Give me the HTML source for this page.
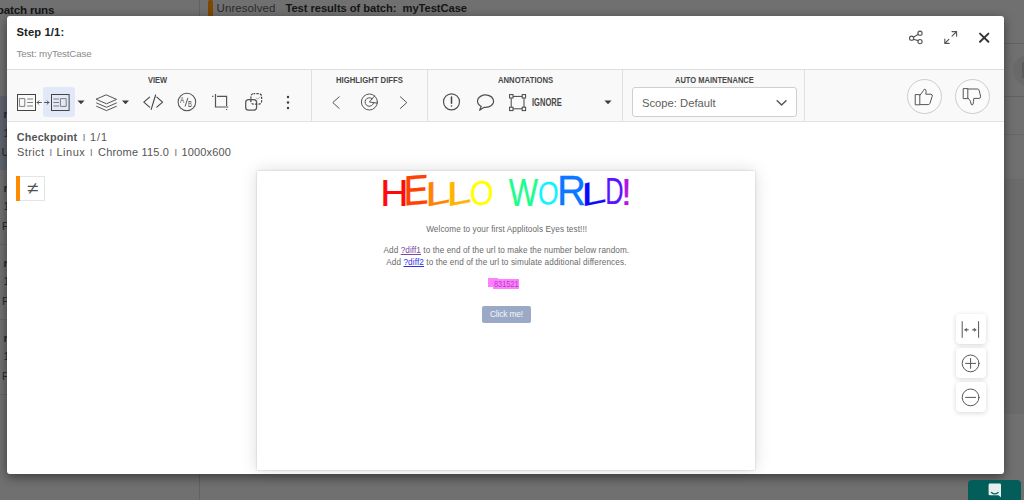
<!DOCTYPE html>
<html lang="en">
<head>
<meta charset="utf-8">
<title>Step 1/1 - Test results of batch: myTestCase</title>
<style>
*{box-sizing:border-box;margin:0;padding:0}
html,body{width:1024px;height:500px;overflow:hidden}
body{position:relative;background:#707070;font-family:"Liberation Sans",sans-serif;color:#333}
.abs{position:absolute}
.t{position:absolute;white-space:nowrap;line-height:1;transform-origin:0 0}
svg{position:absolute;overflow:visible}
/* dimmed page behind the modal */
#leftpanel{left:0;top:0;width:199px;height:500px;background:#707070}
#leftdiv{left:199px;top:0;width:1px;height:500px;background:#626262}
#selrow{left:0;top:96px;width:199px;height:73px;background:#5f6570}
.rowsep{left:0;width:199px;height:1px;background:#656565}
.bgt{color:#161616}
.frag{font-size:11px;color:#2a2a2a}
#obar{left:207.8px;top:0;width:4.8px;height:20px;background:#7e4800;border-radius:2px}
/* modal */
#modal{left:7px;top:16px;width:997px;height:458px;background:#fff;border-radius:3px;box-shadow:0 3px 11px rgba(0,0,0,.48)}
#hdrline{left:7px;top:69px;width:997px;height:1px;background:#dedede}
#toolbar{left:7px;top:70px;width:997px;height:51px;background:#f9f9f9}
#tbline{left:7px;top:121px;width:997px;height:1px;background:#e2e2e2}
.vdiv{top:70px;width:1px;height:51px;background:#e0e0e0}
#sel{left:43px;top:87px;width:32px;height:30px;background:#e1e9f8;border-radius:3px}
.inf{color:#555}
.sep{color:#777;font-weight:bold}
.lbl{font-weight:bold;color:#484848}
#scope{left:632px;top:87px;width:165px;height:30px;background:#fff;border:1px solid #cfcfcf;border-radius:3px}
.circ{width:35px;height:35px;border:1.7px solid #cdcdcd;border-radius:50%;background:#fbfbfb}
/* badge */
#badge{left:16px;top:175.5px;width:28.6px;height:25.2px;background:#fff;border:1px solid #e4e4e4}
#badgebar{left:16px;top:175.5px;width:3.7px;height:25.2px;background:#ff8c00}
/* screenshot */
#shot{left:257px;top:171px;width:498px;height:299px;background:#fff;box-shadow:0 0 2px rgba(0,0,0,.2),0 0 16px rgba(0,0,0,.14)}
.st{color:#6a6a6a}
.lnk1{color:#7a4aa6;text-decoration:underline;text-decoration-thickness:0.8px}
.lnk2{color:#3030e8;text-decoration:underline;text-decoration-thickness:0.8px}
.hl{background:#ff80ff}
#btn{left:482px;top:306px;width:49px;height:17px;background:#9aaac6;border-radius:2px}
.zb{left:956px;width:30px;height:30px;background:#fff;border-radius:4px;box-shadow:0 1px 5px rgba(0,0,0,.16)}
#chat{left:968px;top:480px;width:53px;height:24px;background:#035e5a;border-radius:4px 4px 0 0}
</style>
<style id="fit">
#t_batch{left:-3.2px;top:4.45px;font-size:11.6px;letter-spacing:-0.178px}
#t_unres{left:216.5px;top:2.5px;font-size:11.5px;letter-spacing:0.089px}
#t_title{left:285.5px;top:2.65px;font-size:11.2px;letter-spacing:-0.061px}
#t_step{left:16.5px;top:26.65px;font-size:11.2px;letter-spacing:0.125px}
#t_test{left:16.5px;top:48.85px;font-size:9.8px;letter-spacing:-0.133px}
#t_view{left:147.5px;top:75.0px;font-size:9.5px;transform:scaleX(0.788)}
#t_hd{left:335.8px;top:75.0px;font-size:9.5px;transform:scaleX(0.8122)}
#t_ann{left:497.8px;top:75.0px;font-size:9.5px;transform:scaleX(0.8088)}
#t_am{left:674.6px;top:75.0px;font-size:9.5px;transform:scaleX(0.791)}
#t_ign{left:531.8px;top:97.75px;font-size:10px;transform:scaleX(0.7538)}
#t_scope{left:642.2px;top:97.5px;font-size:11.5px;transform:scaleX(0.9763)}
#t_cp{left:16.8px;top:131.85px;font-size:10.8px;letter-spacing:0.156px}
#t_cps{left:82.9px;top:133.05px;font-size:7.4px;letter-spacing:-2.0px}
#t_cpn{left:90.0px;top:131.85px;font-size:10.8px;letter-spacing:1.0px}
#t_i1{left:17.0px;top:146.75px;font-size:11px;letter-spacing:0.4px}
#t_s1{left:49.7px;top:148.05px;font-size:7.4px;letter-spacing:-2.0px}
#t_i2{left:56.5px;top:146.75px;font-size:11px;letter-spacing:0.5px}
#t_s2{left:90.2px;top:148.05px;font-size:7.4px;letter-spacing:-2.0px}
#t_i3{left:98.0px;top:146.75px;font-size:11px;letter-spacing:0.182px}
#t_s3{left:174.7px;top:148.05px;font-size:7.4px;letter-spacing:-2.0px}
#t_i4{left:181.5px;top:146.75px;font-size:11px;letter-spacing:0.143px}
#t_ne{left:26.6px;top:180.25px;font-size:17px;transform:scaleX(1.2)}
#t_w1{left:426.2px;top:225.65px;font-size:8.2px;letter-spacing:0.091px}
#t_w2{left:383.5px;top:246.65px;font-size:8.2px;letter-spacing:0.078px}
#t_w3{left:386.2px;top:258.65px;font-size:8.2px;letter-spacing:0.104px}
#t_num{left:493.8px;top:279.65px;font-size:9.2px;transform:scaleX(0.8)}
#t_btn{left:490.0px;top:310.05px;font-size:8.4px;letter-spacing:-0.175px}
#t_ab1{left:180.0px;top:95.85px;font-size:8.8px;transform:scaleX(0.7)}
#t_ab2{left:188.1px;top:99.85px;font-size:8.8px;transform:scaleX(0.65)}
</style>
</head>
<body>
<!-- background page (dimmed) -->
<div class="abs" id="leftpanel"></div>
<div class="abs" id="selrow"></div>
<div class="abs rowsep" style="top:169px"></div>
<div class="abs rowsep" style="top:244px"></div>
<div class="abs rowsep" style="top:319px"></div>
<div class="abs rowsep" style="top:394px"></div>
<div class="abs" id="leftdiv"></div>
<span class="t bgt" id="t_batch" style="font-weight:bold">batch runs</span>
<div class="abs" id="obar"></div>
<span class="t bgt" id="t_unres" style="color:#2b2b2b">Unresolved</span>
<span class="t bgt" id="t_title" style="font-weight:bold">Test results of batch:&nbsp; myTestCase</span>


<span class="t bgt frag" style="left:3.5px;top:108.5px;font-weight:bold">run 1</span>
<span class="t bgt frag" style="left:3.5px;top:127.5px">13 Aug 2023</span>
<span class="t bgt frag" style="left:1.5px;top:146.5px">Unresolved</span>
<span class="t bgt frag" style="left:3.5px;top:183px;font-weight:bold">run 2</span>
<span class="t bgt frag" style="left:3.5px;top:201px">12 Aug 2023</span>
<span class="t bgt frag" style="left:2px;top:221px">Passed</span>
<span class="t bgt frag" style="left:3.5px;top:258px;font-weight:bold">run 3</span>
<span class="t bgt frag" style="left:3.5px;top:276px">11 Aug 2023</span>
<span class="t bgt frag" style="left:2px;top:296px">Passed</span>
<span class="t bgt frag" style="left:3.5px;top:333px;font-weight:bold">run 4</span>
<span class="t bgt frag" style="left:3.5px;top:351px">10 Aug 2023</span>
<span class="t bgt frag" style="left:2px;top:371px">Passed</span>
<div class="abs" style="left:200px;top:179px;width:824px;height:235px;background:#6b6b6b"></div>
<div class="abs" style="left:1004px;top:134px;width:20px;height:1px;background:#666"></div>
<div class="abs" style="left:1004px;top:43px;width:20px;height:1px;background:#636363"></div>
<div class="abs" style="left:1004px;top:96px;width:20px;height:1px;background:#636363"></div>
<div class="abs" style="left:1013px;top:54.5px;width:31px;height:31px;border-radius:50%;background:#696969"></div>
<div class="abs" style="left:1022px;top:62px;width:6px;height:16px;background:#5a5a5a"></div>

<!-- modal -->
<div class="abs" id="modal"></div>
<div class="abs" id="hdrline"></div>
<div class="abs" id="toolbar"></div>
<div class="abs" id="tbline"></div>
<span class="t" id="t_step" style="font-weight:bold;color:#222">Step 1/1:</span>
<span class="t" id="t_test" style="color:#8a8a8a">Test: myTestCase</span>

<div class="abs" id="sel"></div>
<div class="abs vdiv" style="left:311px"></div>
<div class="abs vdiv" style="left:427px"></div>
<div class="abs vdiv" style="left:622px"></div>
<div class="abs vdiv" style="left:804px"></div>
<span class="t lbl" id="t_view">VIEW</span>
<span class="t lbl" id="t_hd">HIGHLIGHT DIFFS</span>
<span class="t lbl" id="t_ann">ANNOTATIONS</span>
<span class="t lbl" id="t_am">AUTO MAINTENANCE</span>
<span class="t lbl" id="t_ign">IGNORE</span>
<div class="abs" id="scope"></div>
<span class="t" id="t_scope" style="color:#606060">Scope: Default</span>
<div class="abs circ" style="left:907px;top:79px"></div>
<div class="abs circ" style="left:955px;top:79px"></div>

<span class="t" id="t_cp" style="font-weight:bold;color:#555">Checkpoint</span>
<span class="t sep" id="t_cps">|</span>
<span class="t" id="t_cpn" style="color:#555">1/1</span>
<span class="t inf" id="t_i1">Strict</span>
<span class="t sep" id="t_s1">|</span>
<span class="t inf" id="t_i2">Linux</span>
<span class="t sep" id="t_s2">|</span>
<span class="t inf" id="t_i3">Chrome 115.0</span>
<span class="t sep" id="t_s3">|</span>
<span class="t inf" id="t_i4">1000x600</span>

<div class="abs" id="badge"></div>
<div class="abs" id="badgebar"></div>
<span class="t" id="t_ne" style="color:#505050">≠</span>

<div class="abs" id="shot"></div>
<svg id="hello" width="1024" height="500" viewBox="0 0 1024 500" style="left:0;top:0" font-family="Liberation Sans, sans-serif" font-size="40" stroke-width="0.25" stroke-linejoin="round">
<text transform="matrix(0.9777 0.0000 0 0.9348 380.17 206.10)" fill="#ff0a0a" stroke="#ff0a0a">H</text>
<text transform="matrix(0.9450 -0.0756 0 1.0507 403.58 205.44)" fill="#ff4200" stroke="#ff4200">E</text>
<text transform="matrix(1.1292 -0.2258 0 0.8587 425.19 206.92)" fill="#ff8400" stroke="#ff8400">L</text>
<text transform="matrix(1.1236 -0.2247 0 0.8514 446.40 206.72)" fill="#ffb400" stroke="#ffb400">L</text>
<text transform="matrix(0.7701 -0.0462 0 0.8521 469.81 205.44)" fill="#ffff00" stroke="#ffff00">O</text>
<text transform="matrix(0.7781 0.0000 0 0.9891 508.74 205.80)" fill="#1aff8c" stroke="#1aff8c">W</text>
<text transform="matrix(0.6642 -0.0399 0 0.8099 538.00 205.05)" fill="#0ff4ff" stroke="#0ff4ff">O</text>
<text transform="matrix(1.0042 0.0000 0 1.0543 556.99 205.30)" fill="#0a78ff" stroke="#0a78ff">R</text>
<text transform="matrix(1.1404 -0.2281 0 0.8225 581.35 206.83)" fill="#0a0aff" stroke="#0a0aff">L</text>
<text transform="matrix(0.6345 0.0000 0 0.9420 605.27 204.20)" fill="#5a14ff" stroke="#5a14ff">D</text>
<text transform="matrix(0.9737 0.0000 0 0.9058 621.09 205.30)" fill="#b414e6" stroke="#b414e6">!</text>
</svg>
<span class="t st" id="t_w1">Welcome to your first Applitools Eyes test!!!</span>
<span class="t st" id="t_w2">Add <span class="lnk1">?diff1</span> to the end of the url to make the number below random.</span>
<span class="t st" id="t_w3">Add <span class="lnk2">?diff2</span> to the end of the url to simulate additional differences.</span>
<div class="abs hl" style="left:488px;top:278px;width:10px;height:9px"></div>
<div class="abs hl" style="left:493px;top:279px;width:26px;height:10px"></div>
<span class="t" id="t_num" style="color:#b03cc0">831521</span>
<div class="abs" id="btn"></div>
<span class="t" id="t_btn" style="color:#f4f6fa">Click me!</span>

<div class="abs zb" style="top:314px"></div>
<div class="abs zb" style="top:348px"></div>
<div class="abs zb" style="top:382px"></div>

<div class="abs" id="chat"></div>

<!-- icon layer (page coordinates) -->
<svg id="icons" width="1024" height="500" viewBox="0 0 1024 500" style="left:0;top:0" fill="none" stroke="#4a4a4a" stroke-width="1" stroke-linecap="round" stroke-linejoin="round">
<!-- header icons -->
<g stroke="#555" stroke-width="1.1">
 <circle cx="911.6" cy="38.2" r="2.1"/><circle cx="920" cy="33.2" r="2.1"/><circle cx="920" cy="41.6" r="2.1"/>
 <path d="M913.4 37.2 L918.2 34.3 M913.4 39.3 L918.2 40.6"/>
 <path d="M945.2 43 L948.8 39.4 M952 36.2 L956.2 32"/>
 <path d="M952 31.6 H956.6 V36.2 M944.8 39 V43.4 H949.2"/>
</g>
<path d="M980 33.6 L988.4 41.8 M988.4 33.6 L980 41.8" stroke="#333" stroke-width="1.9"/>
<!-- view group -->
<rect x="17.5" y="94.5" width="18" height="16" stroke="#444" stroke-linejoin="miter"/>
<g stroke="#7d7d7d"><rect x="19.8" y="98.6" width="5" height="7.8"/><path d="M27.6 99 H32.6 M27.6 102.5 H32.6 M27.6 106 H32.6"/></g>
<path d="M37.2 102.5 H41.4 M38.9 100.8 L37.2 102.5 L38.9 104.2 M44.6 102.5 H48.8 M47.1 100.8 L48.8 102.5 L47.1 104.2" stroke="#444" stroke-width="0.9"/>
<rect x="51.5" y="94.5" width="17.6" height="16" stroke="#444" stroke-linejoin="miter"/>
<g stroke="#7d7d7d"><rect x="60.8" y="98.6" width="5.4" height="7.8"/><path d="M53.8 99 H58.6 M53.8 102.5 H58.6 M53.8 106 H58.6"/></g>
<path d="M77.5 100.6 H84.5 L81 104.2 Z" fill="#3c3c3c" stroke="none"/>
<g stroke="#555"><path d="M106.5 95 L116.6 99.4 L106.5 103.8 L96.4 99.4 Z"/><path d="M96.6 103 L106.5 107.3 L116.4 103"/><path d="M96.6 106.3 L106.5 110.6 L116.4 106.3"/></g>
<path d="M122 100.6 H129 L125.5 104.2 Z" fill="#3c3c3c" stroke="none"/>
<path d="M149.6 97.2 L143.8 102.2 L149.6 107.2 M155.6 95 L151.2 109.4 M156.8 97.2 L162.6 102.2 L156.8 107.2" stroke="#444" stroke-width="1.1"/>
<circle cx="186.9" cy="102" r="8.8" stroke="#555" stroke-width="1.05"/>
<path d="M187.8 98.2 L185.2 106.1" stroke="#444" stroke-width="0.9"/>
<path d="M215.5 93.9 V107 H228.3 M217 96.4 H226.6 V106 M212.1 96.4 H213.4 M226.6 108.9 V110" stroke="#555" stroke-width="1.2" stroke-linejoin="miter" stroke-linecap="butt"/>
<rect x="245.7" y="99.7" width="10.9" height="10.5" rx="2.9" stroke="#555" stroke-width="1.25"/>
<rect x="250.9" y="93.7" width="10.7" height="10.4" rx="2.6" stroke="#444" stroke-width="1.2" stroke-dasharray="2.3 1.2" stroke-dashoffset="0.6" stroke-linecap="butt"/>
<path d="M256.4 98.2 L257.7 99.2 L260 96.9" stroke="#999" stroke-width="0.8"/>
<g fill="#3c3c3c" stroke="none"><circle cx="288" cy="97" r="1.2"/><circle cx="288" cy="102.5" r="1.2"/><circle cx="288" cy="108" r="1.2"/></g>
<!-- highlight diffs -->
<path d="M339.2 96.8 L332.8 102.6 L339.2 108.4" stroke="#555"/>
<path d="M400.4 96.8 L406.8 102.6 L400.4 108.4" stroke="#555"/>
<g stroke="#555"><circle cx="369.4" cy="102" r="8"/><path d="M374.6 95.9 L369.4 102 L377.3 103.2"/><path d="M373.66 102.6 A4.3 4.3 0 1 1 372.16 98.7"/></g>
<!-- annotations -->
<circle cx="451.5" cy="101.8" r="8" stroke="#505050" stroke-width="1.2"/>
<path d="M451.5 97 V103.2" stroke="#444" stroke-width="1.5"/><circle cx="451.5" cy="106" r="0.8" fill="#444" stroke="none"/>
<path d="M481.2 106.4 A8 6.2 0 1 1 484.2 107.3 L479.6 110.2 Z" stroke="#505050" stroke-width="1.2"/>
<g stroke="#444" stroke-linejoin="miter" stroke-linecap="butt"><path d="M513 96.4 H522 M513 108.8 H522 M511.2 98.2 V107 M524 98.2 V107"/><rect x="509.6" y="94.6" width="3.4" height="3.4"/><rect x="522.2" y="94.6" width="3.4" height="3.4"/><rect x="509.6" y="107.2" width="3.4" height="3.4"/><rect x="522.2" y="107.2" width="3.4" height="3.4"/></g>
<path d="M604.5 100.6 H611.5 L608 104.2 Z" fill="#3c3c3c" stroke="none"/>
<!-- scope chevron -->
<path d="M777.2 100.8 L781.6 105 L786 100.8" stroke="#555" stroke-width="1.5"/>
<!-- thumbs -->
<g stroke="#555" stroke-width="1">
 <rect x="915.6" y="94.6" width="4.2" height="10.2"/>
 <path d="M920 95.2 L923.6 90.4 Q924.4 88.2 925.6 89.6 Q926.6 91.6 925.8 94.2 H931 Q932.8 94.6 932.2 96.4 L929.8 103.6 Q929.4 104.6 928.2 104.6 H920"/>
 <rect x="963.6" y="88.6" width="4.2" height="10"/>
 <path d="M968 89 H977.6 Q978.6 89 979 90 L980.6 96.2 Q980.8 98.4 979 98.4 H973.8 Q973.6 102 973 104.4 Q972 105.6 971.2 104.4 Q971 100.6 968 98"/>
</g>
<!-- zoom controls -->
<g stroke="#555">
 <path d="M962.2 321.6 V337.4 M978.6 321.6 V337.4" stroke-width="1"/>
 <path d="M964.8 329.8 H968.4 M972.4 329.8 H976" stroke-width="0.9"/>
 <path d="M966.4 328.4 L964.8 329.8 L966.4 331.2 Z M974.4 328.4 L976 329.8 L974.4 331.2 Z" fill="#555" stroke-width="0.6"/>
 <circle cx="970.6" cy="363.4" r="8.4"/><path d="M965.6 363.4 H975.6 M970.6 358.4 V368.4"/>
 <circle cx="970.6" cy="397.4" r="8.4"/><path d="M965.6 397.4 H975.6"/>
</g>
<!-- chat icon -->
<path d="M989.8 483.6 H999.8 Q1001 483.6 1001 484.8 V497.2 L998.4 495.2 H989.8 Q988.6 495.2 988.6 494 V484.8 Q988.6 483.6 989.8 483.6 Z" fill="#e6efee" stroke="none"/>
<path d="M991.5 492.5 Q994.8 495.4 998.1 492.5" stroke="#035e5a" stroke-width="1.25"/>
</svg>
<span class="t" id="t_ab1" style="color:#444">A</span>
<span class="t" id="t_ab2" style="color:#444">B</span>
</body>
</html>
